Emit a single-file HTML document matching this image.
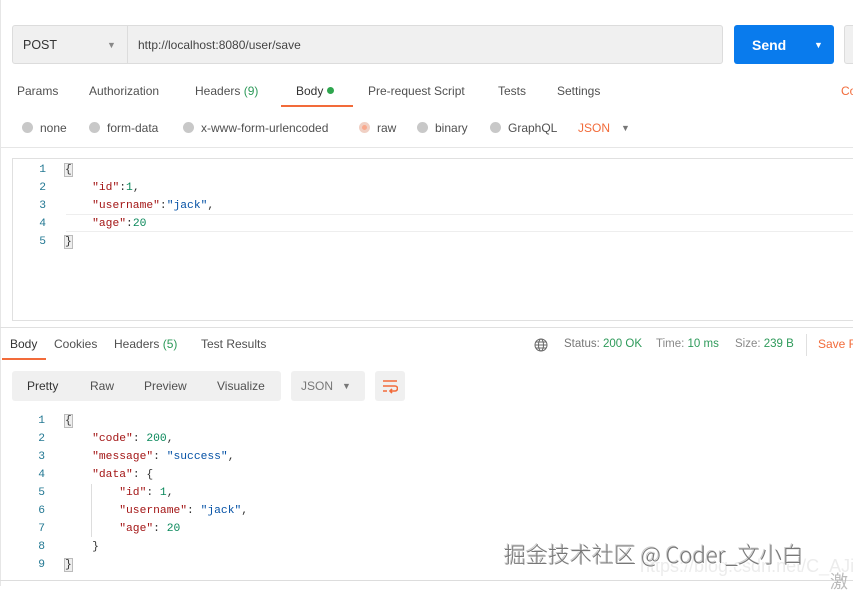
<!DOCTYPE html>
<html><head><meta charset="utf-8"><style>
*{margin:0;padding:0;box-sizing:border-box}
body{width:853px;height:586px;background:#fff;position:relative;overflow:hidden;font-family:"Liberation Sans",sans-serif;font-size:12px;color:#505050}
.a{position:absolute;white-space:nowrap}
.g{color:#2e9a5a}
.o{color:#f26b3a}
.mono{font-family:"Liberation Mono",monospace;font-size:11.3px}
.ln{color:#237893;width:20px;text-align:right}
.k{color:#a31515}.n{color:#09885a}.s{color:#0451a5}.p{color:#333}
.rad{position:absolute;width:11px;height:11px;border-radius:50%;background:#c8c8c8}
</style></head><body>
<div class="a" style="left:0;top:0;width:1px;height:586px;background:#e6e6e6"></div>
<div class="a" style="left:12px;top:25px;width:711px;height:39px;background:#f0f0f0;border:1px solid #dcdcdc;border-radius:3px"></div>
<div class="a" style="left:127px;top:26px;width:1px;height:37px;background:#dcdcdc"></div>
<div class="a" style="left:23px;top:38px;color:#333;font-size:12.5px">POST</div>
<div class="a" style="left:107px;top:40px;font-size:9px;color:#888">▼</div>
<div class="a" style="left:138px;top:38px;color:#444">http://localhost:8080/user/save</div>
<div class="a" style="left:734px;top:25px;width:100px;height:39px;background:#097bed;border-radius:3px"></div>
<div class="a" style="left:752px;top:37px;color:#fff;font-weight:bold;font-size:14px">Send</div>
<div class="a" style="left:814px;top:40px;color:#fff;font-size:9px">▼</div>
<div class="a" style="left:844px;top:25px;width:20px;height:39px;background:#f0f0f0;border:1px solid #dcdcdc;border-radius:3px"></div>
<div class="a" style="top:84px;left:17px">Params</div>
<div class="a" style="top:84px;left:89px">Authorization</div>
<div class="a" style="top:84px;left:195px">Headers <span class="g">(9)</span></div>
<div class="a" style="top:84px;left:296px;color:#333">Body <span style="display:inline-block;width:7px;height:7px;border-radius:50%;background:#2ea64e;vertical-align:1px"></span></div>
<div class="a" style="left:281px;top:105px;width:72px;height:2px;background:#f26b3a"></div>
<div class="a" style="top:84px;left:368px">Pre-request Script</div>
<div class="a" style="top:84px;left:498px">Tests</div>
<div class="a" style="top:84px;left:557px">Settings</div>
<div class="a o" style="top:84px;left:841px">Co</div>
<div class="rad" style="left:22px;top:122px"></div><div class="a" style="top:121px;left:40px">none</div>
<div class="rad" style="left:89px;top:122px"></div><div class="a" style="top:121px;left:107px">form-data</div>
<div class="rad" style="left:183px;top:122px"></div><div class="a" style="top:121px;left:201px">x-www-form-urlencoded</div>
<div class="rad" style="left:359px;top:122px;background:#f9a98d;border:3px solid #f0d0c4"></div><div class="a" style="top:121px;left:377px">raw</div>
<div class="rad" style="left:417px;top:122px"></div><div class="a" style="top:121px;left:435px">binary</div>
<div class="rad" style="left:490px;top:122px"></div><div class="a" style="top:121px;left:508px">GraphQL</div>
<div class="a o" style="top:121px;left:578px">JSON</div>
<div class="a" style="top:123px;left:621px;font-size:9px;color:#777">▼</div>
<div class="a" style="left:0;top:147px;width:853px;height:1px;background:#e6e6e6"></div>
<div class="a" style="left:12px;top:158px;width:850px;height:163px;border:1px solid #e0e0e0"></div>
<div class="a" style="left:66px;top:214px;width:787px;height:18px;border-top:1px solid #eee;border-bottom:1px solid #eee"></div>
<div class="a mono" style="left:26px;top:161px;line-height:18px">
<div class="ln">1</div><div class="ln">2</div><div class="ln">3</div><div class="ln">4</div><div class="ln">5</div></div>
<div class="a mono" style="left:65px;top:161px;line-height:18px;color:#333">
<div><span style="background:#eee;outline:1px solid #bbb">{</span></div>
<div>&nbsp;&nbsp;&nbsp;&nbsp;<span class="k">"id"</span>:<span class="n">1</span>,</div>
<div>&nbsp;&nbsp;&nbsp;&nbsp;<span class="k">"username"</span>:<span class="s">"jack"</span>,</div>
<div>&nbsp;&nbsp;&nbsp;&nbsp;<span class="k">"age"</span>:<span class="n">20</span></div>
<div><span style="background:#eee;outline:1px solid #bbb">}</span></div></div>
<div class="a" style="left:0;top:327px;width:853px;height:1px;background:#e0e0e0"></div>
<div class="a" style="top:337px;left:10px;color:#333">Body</div>
<div class="a" style="left:2px;top:358px;width:44px;height:2px;background:#f26b3a"></div>
<div class="a" style="top:337px;left:54px">Cookies</div>
<div class="a" style="top:337px;left:114px">Headers <span class="g">(5)</span></div>
<div class="a" style="top:337px;left:201px">Test Results</div>
<svg class="a" style="left:534px;top:338px" width="14" height="14" viewBox="0 0 14 14" fill="none" stroke="#666" stroke-width="1"><circle cx="7" cy="7" r="6"/><ellipse cx="7" cy="7" rx="2.5" ry="6"/><path d="M1 7h12M2 4h10M2 10h10"/></svg>
<div class="a" style="top:338px;left:564px;font-size:11.5px;color:#777">Status: <span class="g">200 OK</span></div>
<div class="a" style="top:338px;left:656px;font-size:11.5px;color:#888">Time: <span class="g">10 ms</span></div>
<div class="a" style="top:338px;left:735px;font-size:11.5px;color:#888">Size: <span class="g">239 B</span></div>
<div class="a" style="left:806px;top:334px;width:1px;height:22px;background:#e0e0e0"></div>
<div class="a o" style="top:337px;left:818px">Save R</div>
<div class="a" style="left:12px;top:371px;width:269px;height:30px;background:#f0f0f0;border-radius:3px"></div>
<div class="a" style="top:379px;left:27px;color:#333">Pretty</div>
<div class="a" style="top:379px;left:90px">Raw</div>
<div class="a" style="top:379px;left:144px">Preview</div>
<div class="a" style="top:379px;left:217px">Visualize</div>
<div class="a" style="left:291px;top:371px;width:74px;height:30px;background:#f0f0f0;border-radius:3px"></div>
<div class="a" style="top:379px;left:301px;color:#777">JSON</div>
<div class="a" style="top:381px;left:342px;font-size:9px;color:#777">▼</div>
<div class="a" style="left:375px;top:371px;width:30px;height:30px;background:#f0f0f0;border-radius:3px"></div>
<svg class="a" style="left:382px;top:378px" width="16" height="16" viewBox="0 0 16 16" fill="none" stroke="#f26b3a" stroke-width="1.6"><path d="M1 3h14M1 8h12a2.5 2.5 0 0 1 0 5H8M10 11l-2 2 2 2M1 13h4"/></svg>
<div class="a mono" style="left:25px;top:412px;line-height:18px">
<div class="ln">1</div><div class="ln">2</div><div class="ln">3</div><div class="ln">4</div><div class="ln">5</div><div class="ln">6</div><div class="ln">7</div><div class="ln">8</div><div class="ln">9</div></div>
<div class="a" style="left:91px;top:484px;width:1px;height:53px;background:#ddd"></div>
<div class="a mono" style="left:65px;top:412px;line-height:18px;color:#333">
<div><span style="background:#eee;outline:1px solid #bbb">{</span></div>
<div>&nbsp;&nbsp;&nbsp;&nbsp;<span class="k">"code"</span>: <span class="n">200</span>,</div>
<div>&nbsp;&nbsp;&nbsp;&nbsp;<span class="k">"message"</span>: <span class="s">"success"</span>,</div>
<div>&nbsp;&nbsp;&nbsp;&nbsp;<span class="k">"data"</span>: {</div>
<div>&nbsp;&nbsp;&nbsp;&nbsp;&nbsp;&nbsp;&nbsp;&nbsp;<span class="k">"id"</span>: <span class="n">1</span>,</div>
<div>&nbsp;&nbsp;&nbsp;&nbsp;&nbsp;&nbsp;&nbsp;&nbsp;<span class="k">"username"</span>: <span class="s">"jack"</span>,</div>
<div>&nbsp;&nbsp;&nbsp;&nbsp;&nbsp;&nbsp;&nbsp;&nbsp;<span class="k">"age"</span>: <span class="n">20</span></div>
<div>&nbsp;&nbsp;&nbsp;&nbsp;}</div>
<div><span style="background:#eee;outline:1px solid #bbb">}</span></div></div>
<div class="a" style="left:0;top:580px;width:853px;height:1px;background:#ddd"></div>
<div class="a" style="left:640px;top:556px;font-size:18px;color:#ececec">https://blog.csdn.net/C_AJing</div>
<div class="a" style="left:504px;top:538px;font-size:22px;color:#777;font-family:'Noto Sans CJK SC','Liberation Sans',sans-serif;font-weight:300;text-shadow:1px 1px 0 #fff,-1px -1px 0 #ccc">掘金技术社区 @ Coder_文小白</div>
<div class="a" style="left:830px;top:568px;font-size:18px;color:#bbb;font-family:'Noto Sans CJK SC',sans-serif">激</div>
</body></html>
